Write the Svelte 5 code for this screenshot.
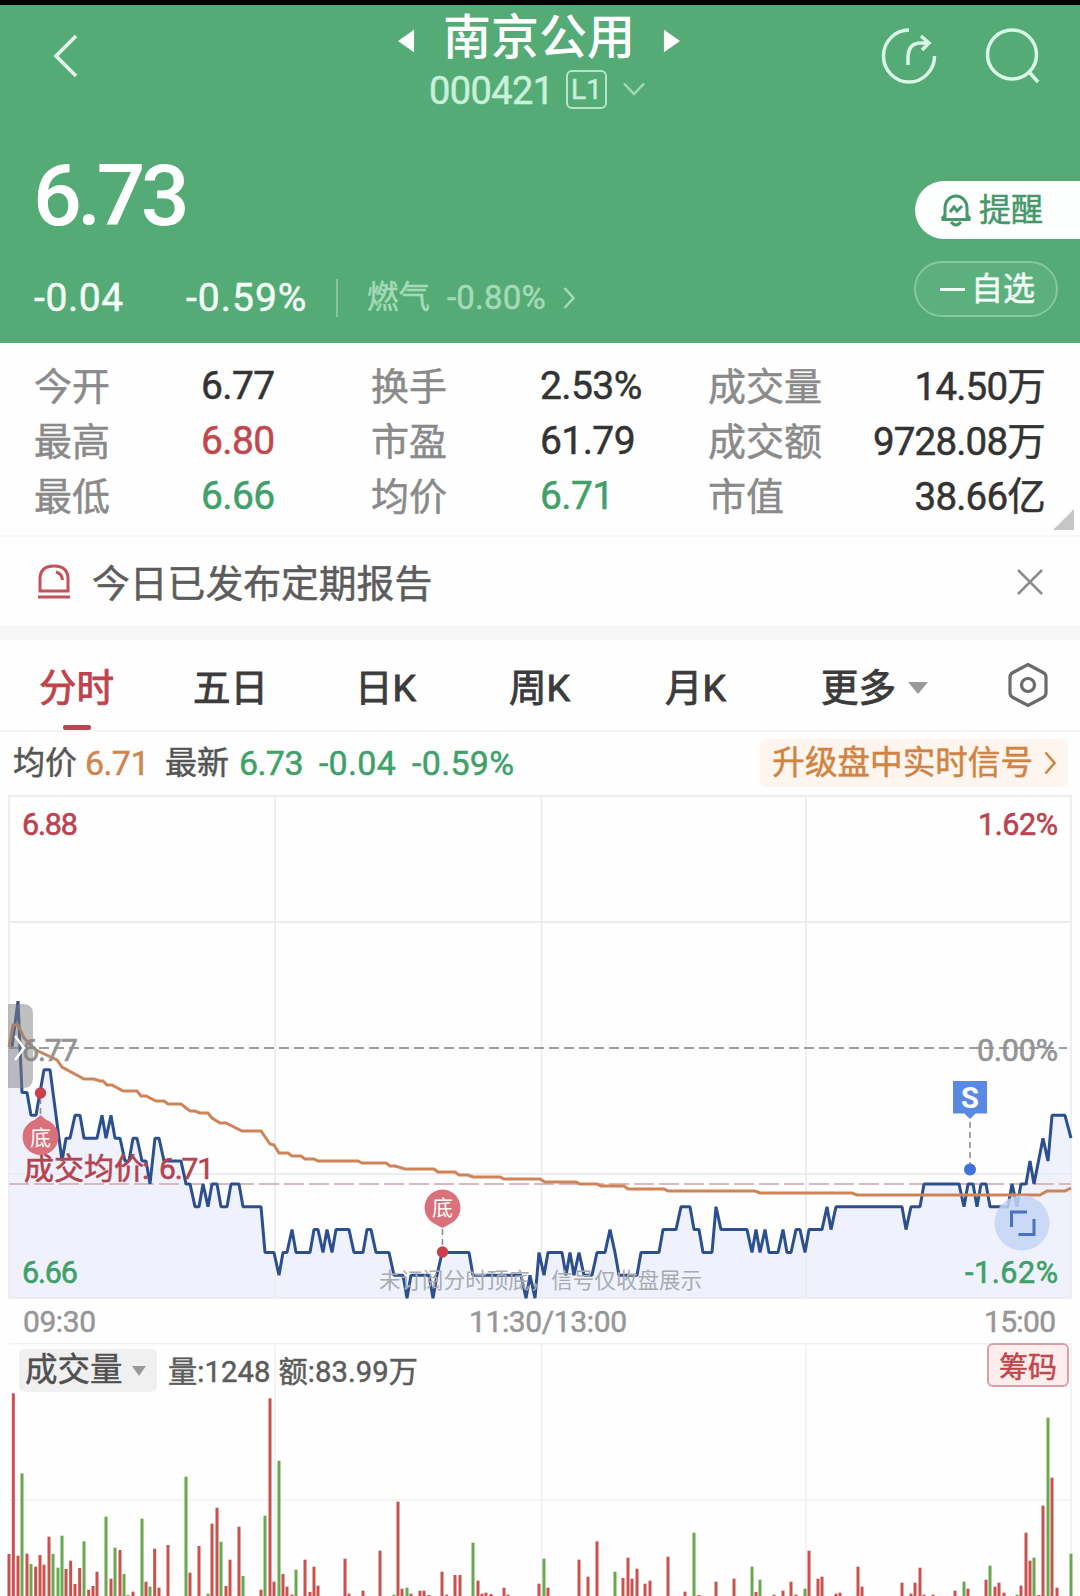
<script lang="ts">
    interface Quote {
        label: string;
        value: string;
        tone?: string;
    }

    const quotes: Quote[] = [
        { label: '今开', value: '6.77' },
        { label: '换手', value: '2.53%' },
        { label: '成交量', value: '14.50万' },
        { label: '最高', value: '6.80', tone: 'up' },
        { label: '市盈', value: '61.79' },
        { label: '成交额', value: '9728.08万' },
        { label: '最低', value: '6.66', tone: 'down' },
        { label: '均价', value: '6.71', tone: 'down' },
        { label: '市值', value: '38.66亿' }
    ];

    const tabs = ['分时', '五日', '日K', '周K', '月K'];
    let activeTab = '分时';
    let noticeVisible = true;

    // [x, ticks below 6.77], one tick is 0.01
    const price: [number, number][] = [
        [12, 0], [18, -2], [22, 2], [27, 2], [31, 3], [36, 3], [44, 1], [50, 1], [56, 3], [62, 5],
        [66, 4], [70, 4], [75, 3], [80, 3], [84, 4], [97, 4], [102, 3], [106, 4], [111, 3], [115, 4],
        [120, 4], [125, 5], [129, 5], [133, 4], [137, 4], [142, 5], [146, 5], [150, 6], [155, 4], [159, 4],
        [164, 5], [181, 5], [186, 6], [190, 6], [195, 7], [199, 7], [203, 6], [208, 7], [212, 6], [217, 6],
        [221, 7], [227, 7], [231, 6], [239, 6], [243, 7], [261, 7], [265, 9], [274, 9], [279, 10], [283, 9],
        [287, 9], [292, 8], [296, 9], [310, 9], [314, 8], [318, 8], [323, 9], [327, 8], [332, 9], [336, 8],
        [349, 8], [354, 9], [363, 9], [367, 8], [371, 8], [376, 9], [389, 9], [394, 10], [403, 10], [407, 11],
        [411, 10], [429, 10], [433, 11], [437, 10], [442, 9], [469, 9], [473, 10], [521, 10], [526, 11], [530, 10],
        [535, 11], [539, 9], [544, 10], [548, 9], [562, 9], [566, 10], [570, 9], [574, 10], [579, 9], [584, 10],
        [592, 10], [597, 9], [605, 9], [610, 8], [615, 9], [619, 10], [637, 10], [641, 9], [659, 9], [663, 8],
        [676, 8], [681, 7], [690, 7], [694, 8], [699, 8], [703, 9], [712, 9], [716, 7], [721, 8], [747, 8],
        [752, 9], [756, 8], [760, 9], [765, 8], [769, 9], [778, 9], [783, 8], [787, 9], [791, 9], [796, 8],
        [800, 8], [805, 9], [809, 8], [822, 8], [827, 7], [831, 8], [836, 7], [902, 7], [906, 8], [911, 7],
        [920, 7], [924, 6], [959, 6], [964, 7], [968, 6], [973, 6], [977, 7], [981, 6], [986, 6], [990, 7],
        [1008, 7], [1012, 6], [1017, 7], [1021, 6], [1026, 6], [1030, 5], [1034, 6], [1043, 4], [1048, 5], [1052, 3],
        [1065, 3], [1071, 4]
    ];

    const pricePoints = price.map(([x, t]) => `${x},${1046.8 + t * 22.85}`).join(' ');
    const areaPoints = `9,1298 9,1048 ${pricePoints} 1071,1298`;

    const averagePoints =
        '9,1047 13,1025 18,1025 24,1038 36,1050 57,1060 62,1067 84,1079 94,1079 100,1081 103,1081 107,1085 112,1085 123,1091 137,1091 ' +
        '141,1096 146,1096 156,1101 164,1101 168,1104 181,1104 190,1111 195,1111 200,1113 208,1113 212,1118 220,1123 226,1123 ' +
        '242,1131 261,1131 270,1144 274,1145 279,1153 288,1153 292,1156 301,1156 305,1159 314,1159 318,1161 358,1161 362,1163 ' +
        '386,1163 390,1166 395,1166 405,1169 434,1169 438,1172 455,1172 459,1175 468,1175 473,1177 500,1177 504,1179 540,1179 ' +
        '545,1182 576,1182 580,1184 597,1184 601,1186 624,1186 628,1189 664,1189 668,1191 755,1191 760,1193 852,1193 857,1195 ' +
        '1040,1195 1047,1191 1065,1191 1071,1188';

    // volume bars: [x, top] on a 3240 x 759 grid
    const redBars: [number, number][] = [
        [27, 672], [40, 190], [54, 677], [81, 671], [107, 710], [120, 675], [132, 704], [147, 620], [198, 717],
        [212, 692], [225, 762], [239, 714], [266, 779], [279, 768], [291, 725], [333, 746], [360, 660], [399, 785],
        [438, 755], [464, 656], [477, 773], [504, 645], [570, 728], [597, 648], [636, 581], [651, 533], [678, 768],
        [690, 689], [717, 590], [783, 779], [810, 205], [822, 755], [849, 732], [861, 770], [876, 794], [915, 689],
        [930, 786], [942, 710], [954, 767], [1035, 686], [1047, 791], [1089, 782], [1140, 662], [1194, 515], [1206, 776],
        [1233, 791], [1260, 782], [1272, 782], [1287, 795], [1326, 725], [1340, 794], [1365, 735], [1380, 735], [1434, 752],
        [1446, 791], [1458, 788], [1473, 792], [1512, 773], [1524, 794], [1617, 761], [1644, 773], [1737, 689], [1764, 740],
        [1791, 634], [1869, 744], [1884, 683], [1896, 746], [1911, 716], [1935, 761], [1950, 752], [2004, 680], [2055, 785],
        [2097, 795], [2148, 755], [2202, 746], [2268, 786], [2322, 794], [2349, 782], [2373, 755], [2388, 794], [2427, 662],
        [2454, 746], [2466, 740], [2508, 791], [2520, 788], [2574, 710], [2586, 770], [2706, 758], [2733, 791], [2745, 758],
        [2760, 713], [2772, 794], [2799, 794], [2865, 782], [2904, 776], [2958, 749], [2985, 770], [2997, 758], [3012, 788],
        [3063, 767], [3078, 608], [3090, 692], [3117, 795], [3129, 527], [3156, 443], [3171, 773]
    ];
    const greenBars: [number, number][] = [
        [66, 430], [93, 702], [159, 672], [174, 713], [186, 617], [252, 634], [318, 560], [345, 653], [372, 732],
        [384, 795], [426, 566], [450, 770], [558, 440], [624, 791], [663, 635], [729, 738], [795, 557], [837, 392],
        [888, 719], [1182, 794], [1221, 773], [1419, 638], [1632, 686], [1845, 725], [2082, 608], [2256, 710], [2280, 749],
        [2415, 776], [2892, 755], [2970, 707], [3051, 794], [3102, 683], [3144, 263], [3213, 671]
    ];
</script>

<div class="page">
    <header class="header">
        <div class="nav">
            <svg class="back" viewBox="0 0 26 44"><path d="M23 2 L3 22 L23 42" /></svg>
            <div class="stock">
                <div class="name-row">
                    <svg class="arrow" viewBox="0 0 18 24"><path d="M0 12 L17 0 V24 Z" /></svg>
                    <span class="name">南京公用</span>
                    <svg class="arrow" viewBox="0 0 18 24"><path d="M18 12 L1 0 V24 Z" /></svg>
                </div>
                <div class="code-row">
                    <span class="code">000421</span>
                    <span class="level">L1</span>
                    <svg class="caret" viewBox="0 0 22 14"><path d="M1 1.5 L11 12 L21 1.5" /></svg>
                </div>
            </div>
            <svg class="share" viewBox="0 0 56 58">
                <path d="M28 3 A25.5 26 0 1 0 53.5 29" />
                <path d="M27 38 V31 Q27 16 40 16 H48 M40 9 L48 16 L41 23" />
            </svg>
            <svg class="search" viewBox="0 0 56 58">
                <circle cx="27" cy="27.5" r="24.5" />
                <path d="M45 46 L53 55" />
            </svg>
        </div>

        <div class="price-row">
            <div class="price">6.73</div>
            <button class="remind">
                <svg class="bell" viewBox="0 0 32 34">
                    <path d="M5 26 V15 A11 12 0 0 1 27 15 V26 M1.5 26.5 H30.5 M5 22 L2 26 M27 22 L30 26" />
                    <path d="M11 29 Q16 35 21 29" />
                    <path d="M10 19 L14 14 L17 18 L22 13" />
                </svg>
                提醒
            </button>
        </div>

        <div class="change-row">
            <span class="change">-0.04</span>
            <span class="percent">-0.59%</span>
            <span class="sector">燃气</span>
            <span class="sector-change">-0.80%</span>
            <svg class="chevron" viewBox="0 0 12 22"><path d="M1.5 1 L10.5 11 L1.5 21" /></svg>
            <button class="favorite"><i class="minus"></i>自选</button>
        </div>
    </header>

    <section class="quotes">
        {#each quotes as quote}
            <span class="label">{quote.label}</span>
            <span class="value {quote.tone ?? ''}">{quote.value}</span>
        {/each}
        <i class="corner"></i>
    </section>

    {#if noticeVisible}
        <section class="notice">
            <svg class="alarm" viewBox="0 0 34 36">
                <path d="M3 27 V15 Q3 2 17 2 Q31 2 31 15 V27 Z" />
                <path d="M19 8 Q25 9.5 25.5 16 M1 33 H33" />
            </svg>
            <span class="notice-text">今日已发布定期报告</span>
            <svg class="close" viewBox="0 0 26 26" on:click={() => (noticeVisible = false)}>
                <path d="M1 1 L25 25 M25 1 L1 25" />
            </svg>
        </section>
    {/if}

    <nav class="tabs">
        {#each tabs as tab}
            <button class="tab" class:active={activeTab === tab} on:click={() => (activeTab = tab)}>{tab}</button>
        {/each}
        <button class="tab more">更多<i class="triangle"></i></button>
        <svg class="settings" viewBox="0 0 42 46">
            <path d="M21 2.5 L36 10.5 Q39 12 39 15 V31 Q39 34 36 35.5 L21 43.5 L6 35.5 Q3 34 3 31 V15 Q3 12 6 10.5 Z" />
            <circle cx="21" cy="23" r="6.5" />
        </svg>
    </nav>

    <div class="legend">
        <span class="legend-label">均价</span>
        <span class="legend-value average">6.71</span>
        <span class="legend-label latest">最新</span>
        <span class="legend-value down">6.73</span>
        <span class="legend-value down diff">-0.04</span>
        <span class="legend-value down diff">-0.59%</span>
        <span class="upgrade">
            升级盘中实时信号
            <svg class="upgrade-arrow" viewBox="0 0 12 24"><path d="M1.5 1.5 L10.5 12 L1.5 22.5" /></svg>
        </span>
    </div>

    <svg class="chart" viewBox="0 795 1080 548">
        <polygon class="area" points={areaPoints} />
        <path class="grid" d="M9 796 H1071 V1298 H9 Z M275 796 V1298 M541.5 796 V1298 M806 796 V1298 M9 922 H1071 M9 1174 H1071" />
        <line class="base" x1="9" y1="1048" x2="1067" y2="1048" />
        <line class="cost" x1="9" y1="1184" x2="1071" y2="1184" />

        <polyline class="line" points={pricePoints} />
        <polyline class="avg" points={averagePoints} />
        <text class="watermark" x="379" y="1288" textLength="323">未订阅分时顶底，信号仅收盘展示</text>

        <text class="axis high" x="22" y="835" textLength="56">6.88</text>
        <text class="axis high" x="978" y="835" textLength="80">1.62%</text>
        <text class="axis flat" x="22" y="1061" textLength="56">6.77</text>
        <text class="axis flat" x="977" y="1061" textLength="81">0.00%</text>
        <text class="axis low" x="22" y="1283" textLength="56">6.66</text>
        <text class="axis low" x="965" y="1283" textLength="93">-1.62%</text>
        <text class="cost-label" x="24" y="1179" textLength="120">成交均价</text>
        <text class="cost-label" x="142" y="1179">:</text>
        <text class="cost-label" x="159" y="1179" textLength="55">6.71</text>

        <path class="handle" d="M8 1004 H23 Q33 1004 33 1014 V1078 Q33 1088 23 1088 H8 Z" />
        <path class="handle-arrow" d="M15 1036 L24 1048 L15 1060" />

        <line class="stem" x1="40.5" y1="1098" x2="40.5" y2="1116" />
        <circle class="dot" cx="40.5" cy="1093" r="5.7" />
        <path class="pin" d="M40.5 1115 L46 1119.8 A18 18 0 1 1 35 1119.8 Z" />
        <text class="pin-text" x="40.5" y="1145">底</text>

        <line class="stem" x1="442.5" y1="1229" x2="442.5" y2="1248" />
        <circle class="dot" cx="442.5" cy="1252" r="5.7" />
        <path class="pin" d="M442.5 1228 L436 1224.4 A18 18 0 1 1 449 1224.4 Z" />
        <text class="pin-text" x="442.5" y="1215">底</text>

        <line class="stem" x1="970" y1="1122" x2="970" y2="1164" />
        <circle class="sell-dot" cx="970" cy="1169.5" r="6" />
        <path class="sell" d="M953 1081 H987 V1113.5 H975.5 L970 1119 L964.5 1113.5 H953 Z" />
        <text class="sell-text" x="970" y="1108">S</text>

        <circle class="expand" cx="1022" cy="1223" r="27.5" />
        <path class="expand-icon" d="M1011.5 1227 V1212 H1027 M1018.5 1234.5 H1034 V1219" />

        <text class="time" x="23" y="1332" textLength="73">09:30</text>
        <text class="time" x="469" y="1332" textLength="158">11:30/13:00</text>
        <text class="time" x="984" y="1332" textLength="72">15:00</text>
    </svg>

    <section class="volume">
        <svg class="volume-chart" viewBox="0 39 3240 759">
            <path class="volume-grid" d="M27 41 H3213 M27 510 H3213 M825 39 V798 M1625 39 V798 M2418 39 V798 M3213 39 V798" />
            {#each redBars as [x, y]}
                <line class="bar red" x1={x} y1={y} x2={x} y2="798" />
            {/each}
            {#each greenBars as [x, y]}
                <line class="bar green" x1={x} y1={y} x2={x} y2="798" />
            {/each}
        </svg>
        <div class="volume-head">
            <span class="indicator">成交量<i class="triangle small"></i></span>
            <span class="volume-value">量:1248</span>
            <span class="volume-value amount">额:83.99万</span>
            <span class="chips">筹码</span>
        </div>
    </section>
</div>

<style>
    :global(body) {
        margin: 0;
        background: #fff;
    }

    .page {
        width: 1080px;
        height: 1596px;
        box-sizing: border-box;
        border-top: 5px solid #000;
        overflow: hidden;
        background: #fefefe;
        font-family: Roboto, 'Noto Sans CJK SC', sans-serif;
        color: #333;
        -webkit-text-stroke: 0.5px;
    }

    button {
        border: none;
        background: none;
        padding: 0;
        margin: 0;
        font: inherit;
        color: inherit;
    }

    svg {
        display: block;
        flex: none;
        fill: none;
    }

    .up { color: #c0474b; }
    .down { color: #40a069; }

    /* header */
    .header {
        height: 338px;
        background: #54ab76;
        color: #f4fff8;
        display: flex;
        flex-direction: column;
    }

    .nav {
        height: 138px;
        display: flex;
        align-items: flex-start;
    }

    .back {
        width: 26px;
        height: 44px;
        margin: 29px 0 0 53px;
        stroke: #e4faec;
        stroke-width: 3.5;
    }

    .stock {
        width: 300px;
        margin-left: 310px;
    }

    .name-row {
        display: flex;
        align-items: center;
        justify-content: center;
        gap: 28px;
        height: 61px;
    }

    .name {
        font-size: 48px;
        font-weight: 500;
        line-height: 60px;
        padding-top: 4px;
        color: #fff;
        -webkit-text-stroke: 0;
    }

    .arrow {
        width: 17px;
        height: 24px;
        margin-top: 11px;
        fill: #fff;
    }

    .code-row {
        display: flex;
        align-items: center;
        margin-left: 40px;
        height: 46px;
        color: #c9f0d8;
    }

    .code {
        width: 137px;
        padding-top: 3px;
        font-size: 38px;
        letter-spacing: -0.6px;
    }

    .level {
        width: 37px;
        height: 35px;
        border: 2px solid #b5e6c8;
        border-radius: 6px;
        font-size: 28px;
        line-height: 36px;
        text-align: center;
    }

    .caret {
        width: 22px;
        height: 14px;
        margin-left: 16px;
        stroke: #a5dab9;
        stroke-width: 2.5;
    }

    .share,
    .search {
        width: 56px;
        height: 58px;
        margin-top: 22px;
        stroke: #d9f8e5;
        stroke-width: 3.5;
    }

    .share { margin-left: 192px; }
    .search { margin-left: 48px; }

    .price-row {
        display: flex;
        justify-content: space-between;
        height: 113px;
    }

    .price {
        margin-left: 33px;
        font-size: 86px;
        font-weight: 500;
        line-height: 106px;
        letter-spacing: -4.6px;
        color: #fff;
        -webkit-text-stroke: 0;
    }

    .remind {
        width: 165px;
        height: 58px;
        margin-top: 38px;
        box-sizing: border-box;
        padding-left: 25px;
        display: flex;
        align-items: center;
        gap: 7px;
        border-radius: 29px 0 0 29px;
        background: #fdfffe;
        color: #46976a;
        font-size: 32px;
        line-height: 64px;
    }

    .bell {
        width: 32px;
        height: 34px;
        stroke: #46976a;
        stroke-width: 3;
    }

    .change-row {
        display: flex;
        align-items: center;
        height: 84px;
        margin-left: 34px;
        line-height: 40px;
    }

    .change {
        width: 152px;
        font-size: 39px;
        letter-spacing: 0.6px;
    }

    .percent {
        width: 150px;
        height: 38px;
        line-height: 38px;
        border-right: 2px solid #85c89e;
        font-size: 39px;
        letter-spacing: 1px;
    }

    .sector {
        width: 80px;
        margin-left: 29px;
        font-size: 31.5px;
        line-height: 42px;
        color: #a5dab8;
    }

    .sector-change {
        width: 116px;
        font-size: 33px;
        line-height: 38px;
        letter-spacing: 0.2px;
        color: #a5dab8;
    }

    .chevron {
        width: 12px;
        height: 22px;
        stroke: #a5dab8;
        stroke-width: 2.5;
    }

    .favorite {
        width: 144px;
        height: 56px;
        margin: -18px 0 0 339px;
        box-sizing: border-box;
        padding-left: 3px;
        display: flex;
        align-items: center;
        justify-content: center;
        gap: 6px;
        border: 2px solid #85c89e;
        border-radius: 28px;
        background: #5bb07e;
        font-size: 32px;
        line-height: 56px;
    }

    .minus {
        width: 25px;
        height: 3px;
        background: #eefcf3;
    }

    /* quotes */
    .quotes {
        position: relative;
        height: 194px;
        box-sizing: border-box;
        padding: 16px 35px 0 34px;
        display: grid;
        grid-template-columns: 167px 170px 169px 168px 130px 1fr;
        grid-auto-rows: 55px;
        border-bottom: 2px solid #f5f5f5;
        font-size: 38px;
        line-height: 55px;
        white-space: nowrap;
    }

    .label {
        padding-top: 1px;
        color: #8a8a8a;
    }

    .value {
        font-size: 39px;
        letter-spacing: -0.6px;
    }

    .value:nth-of-type(6n) {
        justify-self: end;
        font-size: 38.5px;
        letter-spacing: -0.8px;
    }

    .corner {
        position: absolute;
        right: 6px;
        bottom: 5px;
        border-left: 21px solid transparent;
        border-bottom: 21px solid #c6c6c6;
    }

    /* notice */
    .notice {
        height: 89px;
        padding: 0 37px;
        display: flex;
        align-items: center;
        border-bottom: 14px solid #f6f6f6;
    }

    .alarm {
        width: 34px;
        height: 36px;
        stroke: #c2525b;
        stroke-width: 3;
    }

    .notice-text {
        margin-left: 21px;
        padding-top: 4px;
        font-size: 37.8px;
        line-height: 60px;
        color: #5c5c5c;
    }

    .close {
        width: 26px;
        height: 26px;
        margin-left: auto;
        stroke: #8c8c8c;
        stroke-width: 2.5;
    }

    /* period tabs */
    .tabs {
        height: 92px;
        box-sizing: border-box;
        padding: 0 31px 0 39px;
        display: grid;
        grid-template-columns: 154px 162px 154px 156px 156px 1fr 42px;
        align-items: center;
        border-bottom: 2px solid #f4f4f4;
    }

    .tab {
        position: relative;
        justify-self: start;
        padding-top: 5px;
        height: 90px;
        box-sizing: border-box;
        font-size: 37.5px;
        line-height: 86px;
        color: #3b3b3b;
        -webkit-text-stroke: 0.9px;
    }

    .tab.active { color: #c0434b; }

    .tab.active::after {
        content: '';
        position: absolute;
        left: 24px;
        bottom: 0;
        width: 28px;
        height: 5px;
        border-radius: 2px;
        background: #b94750;
    }

    .more {
        display: flex;
        align-items: center;
        gap: 12px;
    }

    .triangle {
        border: 10px solid transparent;
        border-top: 12px solid #999;
        border-bottom: none;
    }

    .triangle.small {
        border-width: 10px 7px 0;
    }

    .settings {
        width: 42px;
        height: 46px;
        stroke: #6b6b6b;
        stroke-width: 3.2;
    }

    /* legend */
    .legend {
        height: 62px;
        padding: 0 12px 1px 13px;
        display: flex;
        align-items: center;
        line-height: 46px;
    }

    .legend-label {
        width: 72px;
        font-size: 32px;
        line-height: 50px;
        color: #555;
    }

    .latest {
        width: 74px;
        margin-left: 17px;
    }

    .legend-value {
        font-size: 34px;
        line-height: 47px;
        letter-spacing: -0.6px;
    }

    .average { color: #cf8550; width: 63px; }

    .diff {
        margin-left: 16px;
        letter-spacing: 0.3px;
    }

    .upgrade {
        height: 48px;
        margin-left: auto;
        padding: 0 12px 0 12px;
        display: flex;
        align-items: center;
        gap: 11px;
        border-radius: 6px;
        background: #fdf5ee;
        color: #d18341;
        font-size: 32.6px;
        line-height: 51px;
    }

    .upgrade-arrow {
        width: 12px;
        height: 24px;
        stroke: #d18341;
        stroke-width: 2.5;
    }

    /* intraday chart */
    .chart {
        width: 1080px;
        height: 548px;
    }

    .area { fill: #eff2fc; }
    .grid { stroke: #ededf0; stroke-width: 1.8; }
    .base { stroke: #9d9d9d; stroke-width: 2; stroke-dasharray: 10 5; }
    .cost { stroke: #d9b9bf; stroke-width: 2; stroke-dasharray: 20 5; }
    .line { stroke: #2c4f8f; stroke-width: 3; stroke-linejoin: bevel; }
    .avg { stroke: #cf8458; stroke-width: 3; }
    .handle { fill: #808080; opacity: 0.5; }
    .handle-arrow { stroke: #fff; stroke-width: 2.5; }

    .watermark {
        font-size: 21.5px;
        fill: #a9abb0;
    }

    .axis {
        font-size: 30.5px;
        stroke-width: 0.6;
    }

    .high { fill: #b9444f; stroke: #b9444f; }
    .low { fill: #40a069; stroke: #40a069; }
    .flat { fill: #949494; stroke: #949494; }

    .time {
        font-size: 30px;
        fill: #969696;
        stroke: #969696;
        stroke-width: 0.5;
    }

    .cost-label {
        font-size: 30px;
        fill: #b34450;
        stroke: #b34450;
        stroke-width: 0.6;
    }

    .stem { stroke: #8e8e95; stroke-width: 1.6; stroke-dasharray: 6 4; }
    .dot { fill: #cb3e4c; }
    .pin { fill: #d9707a; }

    .pin-text {
        font-size: 21px;
        fill: #fff;
        text-anchor: middle;
    }

    .sell { fill: #5a89e4; }
    .sell-dot { fill: #3d73d6; }

    .sell-text {
        font-size: 29px;
        font-weight: 700;
        fill: #fff;
        text-anchor: middle;
    }

    .expand { fill: #c3d5f5; opacity: 0.85; }
    .expand-icon { stroke: #4772bf; stroke-width: 3; }

    /* volume */
    .volume {
        position: relative;
        height: 253px;
    }

    .volume-chart {
        position: absolute;
        left: 0;
        top: 0;
        width: 1080px;
        height: 253px;
    }

    .volume-grid { stroke: #f1f1f3; stroke-width: 5; }
    .bar { stroke-width: 9; }
    .red { stroke: #c9524f; }
    .green { stroke: #69a84f; }

    .volume-head {
        position: relative;
        display: flex;
        align-items: flex-start;
        padding: 0 11px 0 19px;
    }

    .indicator {
        width: 138px;
        height: 43px;
        margin-top: 6px;
        box-sizing: border-box;
        padding-left: 6px;
        display: flex;
        align-items: center;
        gap: 9px;
        border-radius: 6px;
        background: #f0f0f0;
        font-size: 32.5px;
        line-height: 49px;
        color: #505050;
    }

    .volume-value {
        margin: 6px 0 0 11px;
        font-size: 29.2px;
        line-height: 46px;
        letter-spacing: 0.1px;
        color: #5c5c5c;
    }

    .amount { margin-left: 8px; }

    .chips {
        width: 82px;
        height: 44px;
        margin-left: auto;
        box-sizing: border-box;
        border: 2px solid #d9a0a4;
        border-radius: 6px;
        background: #fdeeed;
        color: #c0474b;
        font-size: 29px;
        line-height: 47px;
        text-align: center;
    }
</style>
